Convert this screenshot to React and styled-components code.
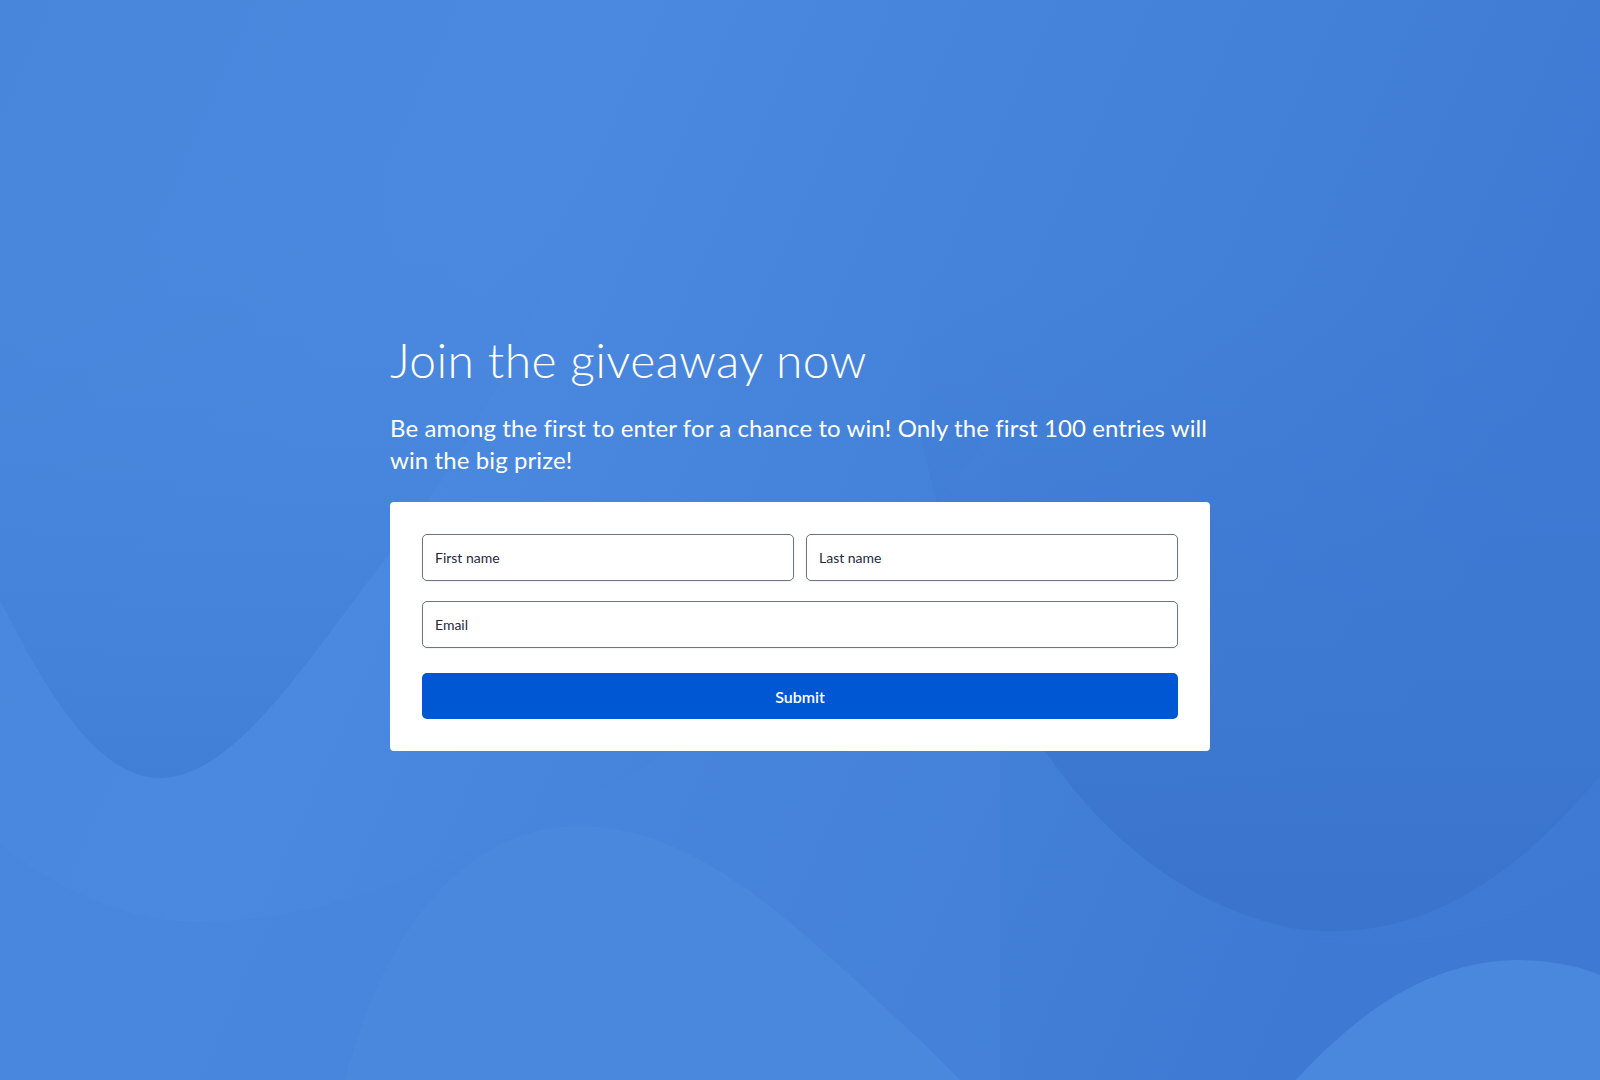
import React from "react";
import styled, { createGlobalStyle } from "styled-components";

const GlobalStyle = createGlobalStyle`
  html, body {
    margin: 0;
    padding: 0;
  }
  body {
    font-family: Lato, "Noto Sans", sans-serif;
    background: #4784db;
  }
  * {
    box-sizing: border-box;
  }
`;

const Page = styled.main`
  position: relative;
  min-height: 100vh;
  padding-top: 2px;
  display: flex;
  align-items: center;
  justify-content: center;
  overflow: hidden;
`;

const Backdrop = styled.svg`
  position: absolute;
  inset: 0;
  width: 100%;
  height: 100%;
  z-index: 0;
`;

const Content = styled.section`
  position: relative;
  z-index: 1;
  width: 820px;
  display: flex;
  flex-direction: column;
`;

const Title = styled.h1`
  margin: 0 0 24px;
  font-size: 48px;
  line-height: 1.2;
  font-weight: 300;
  letter-spacing: 0.4px;
  font-variant-ligatures: none;
  color: #ffffff;
`;

const Lead = styled.p`
  margin: 0 0 26px;
  font-size: 24px;
  line-height: 32px;
  font-weight: 400;
  letter-spacing: 0.1px;
  font-variant-ligatures: none;
  color: #ffffff;
`;

const Card = styled.form`
  background: #ffffff;
  border-radius: 4px;
  padding: 32px;
  display: flex;
  flex-direction: column;
  gap: 20px;
`;

const Row = styled.div`
  display: grid;
  grid-template-columns: ${(p) => (p.$split ? "1fr 1fr" : "1fr")};
  gap: 12px;
`;

const Input = styled.input`
  height: 47px;
  width: 100%;
  padding: 0 12px;
  border: 1px solid #6b7385;
  border-radius: 5px;
  background: #ffffff;
  box-shadow: 0 1px 2px rgba(15, 23, 42, 0.06);
  font-family: Lato, "Noto Sans", sans-serif;
  font-size: 14px;
  color: #1e293b;
  outline: none;

  &::placeholder {
    color: #1f2a3d;
    opacity: 1;
  }
`;

const SubmitButton = styled.button`
  margin-top: 5px;
  height: 46px;
  width: 100%;
  border: none;
  border-radius: 5px;
  background: #0057d4;
  color: #ffffff;
  font-family: Lato, "Noto Sans", sans-serif;
  font-size: 16px;
  font-weight: 600;
  cursor: pointer;
`;

const Waves = () => (
  <Backdrop viewBox="0 0 1600 1080" preserveAspectRatio="none" aria-hidden="true">
    <defs>
      <linearGradient id="base" x1="0" y1="0" x2="1" y2="0.3">
        <stop offset="0" stopColor="#4886dc" />
        <stop offset="0.35" stopColor="#4a89df" />
        <stop offset="1" stopColor="#3e7ad3" />
      </linearGradient>
      <linearGradient id="leftBlob" x1="0" y1="0" x2="0" y2="1">
        <stop offset="0.2" stopColor="#4a88de" stopOpacity="0" />
        <stop offset="1" stopColor="#417ed6" stopOpacity="1" />
      </linearGradient>
      <linearGradient id="rightBlob" x1="0" y1="0" x2="0" y2="1">
        <stop offset="0.3" stopColor="#3e7ad3" stopOpacity="0" />
        <stop offset="0.95" stopColor="#3a74cd" stopOpacity="1" />
      </linearGradient>
      <linearGradient id="rightArc" x1="0" y1="0" x2="0" y2="1">
        <stop offset="0.5" stopColor="#3f7bd4" stopOpacity="0" />
        <stop offset="1" stopColor="#3f7bd4" stopOpacity="0.45" />
      </linearGradient>
    </defs>
    <rect width="1600" height="1080" fill="url(#base)" />
    {/* faint band lower left */}
    <path
      d="M0 845 C60 890 120 920 190 922 C330 925 470 860 620 780 C760 700 900 560 1000 420 L1000 1080 L0 1080 Z"
      fill="#4784db"
      opacity="0.5"
    />
    {/* darker drop on the left */}
    <path
      d="M0 0 L0 600 C50 700 100 778 160 778 C240 778 320 640 400 540 C480 430 560 300 640 0 Z"
      fill="url(#leftBlob)"
    />
    {/* outer arc on the right */}
    <path
      d="M930 460 C960 640 1080 900 1330 940 C1450 958 1540 900 1600 870 L1600 0 L930 0 Z"
      fill="url(#rightArc)"
    />
    {/* dark circle on the right */}
    <path
      d="M920 430 C960 640 1070 880 1290 928 C1430 950 1530 860 1600 776 L1600 0 L920 0 Z"
      fill="url(#rightBlob)"
    />
    {/* light bump bottom center */}
    <path
      d="M345 1080 C380 940 460 828 575 826 C700 824 800 930 920 1040 L960 1080 Z"
      fill="#4a88de"
    />
    {/* light bump bottom right */}
    <path
      d="M1296 1080 C1360 1010 1430 962 1515 960 C1550 960 1580 966 1600 975 L1600 1080 Z"
      fill="#4a88de"
    />
  </Backdrop>
);

const App = () => {
  return (
    <>
      <GlobalStyle />
      <Page>
        <Waves />
        <Content>
          <Title>Join the giveaway now</Title>
          <Lead>
            Be among the first to enter for a chance to win! Only the first 100
            entries will win the big prize!
          </Lead>
          <Card onSubmit={(e) => e.preventDefault()}>
            <Row $split>
              <Input type="text" placeholder="First name" />
              <Input type="text" placeholder="Last name" />
            </Row>
            <Row>
              <Input type="email" placeholder="Email" />
            </Row>
            <SubmitButton type="submit">Submit</SubmitButton>
          </Card>
        </Content>
      </Page>
    </>
  );
};

export default App;
